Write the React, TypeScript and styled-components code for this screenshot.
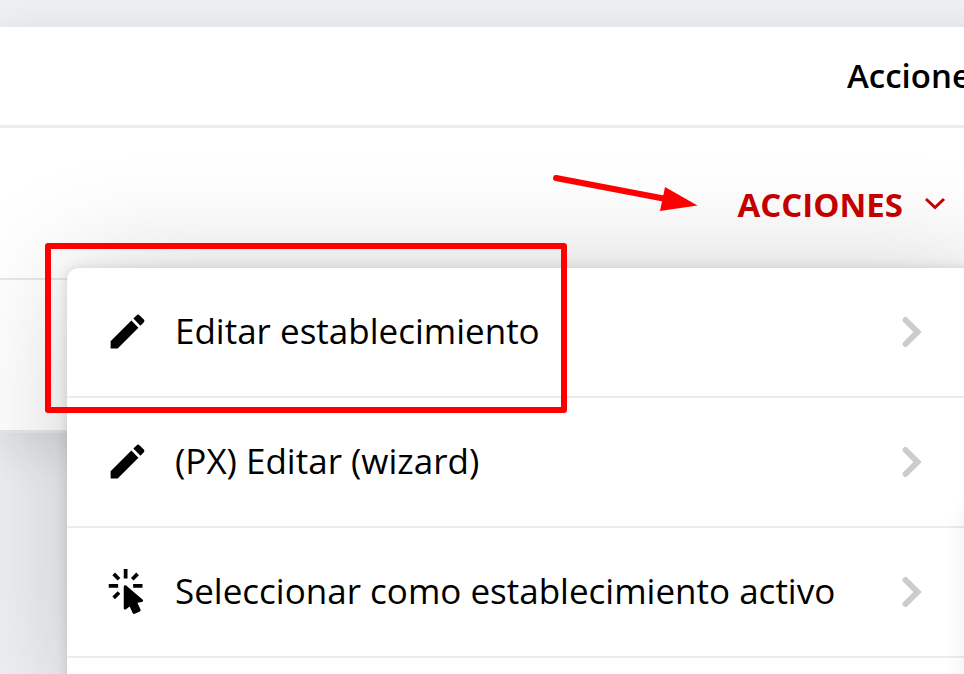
import React from "react";
import styled, { createGlobalStyle } from "styled-components";

const GlobalStyle = createGlobalStyle`
  * { box-sizing: border-box; }
  html, body { margin: 0; }
  body {
    background: #eceef0;
    color: #000;
    font-family: "Open Sans", "Noto Sans", sans-serif;
    overflow: hidden;
  }
  button { font: inherit; color: inherit; background: none; border: 0; margin: 0; cursor: pointer; }
`;

const Page = styled.main`
  position: relative;
  min-height: 100vh;
  padding-top: 27px;
  overflow: hidden;
  background: #eff0f3;
`;

const TableCard = styled.section`
  width: calc(100% + 40px);
  background: #fff;
  box-shadow: 0 12px 48px rgba(20, 25, 30, 0.13);
`;

const Table = styled.table`
  width: 100%;
  border-collapse: separate;
  border-spacing: 0;
`;

const HeadCell = styled.th`
  height: 101px;
  padding: 0 17px 0 0;
  border-bottom: 3px solid #ececec;
  font-size: 33px;
  font-weight: 600;
  line-height: 48px;
  text-align: right;
`;

const Cell = styled.td<{ $last?: boolean }>`
  height: ${(p) => (p.$last ? 153 : 152)}px;
  padding: 4px 58px 0 0;
  border-bottom: ${(p) => (p.$last ? 3 : 2)}px solid #e8e8e8;
  text-align: right;
`;

const ActionsButton = styled.button`
  display: inline-flex;
  align-items: center;
  gap: 21px;
  padding: 0;
  color: #c80000;
  font-size: 33px;
  font-weight: 700;
  line-height: 48px;
`;

const Menu = styled.ul`
  position: absolute;
  top: 268px;
  left: 67px;
  right: -32px;
  margin: 0;
  padding: 0 0 40px;
  list-style: none;
  background: #fff;
  border-radius: 12px;
  box-shadow: 0 0 12px rgba(0, 0, 0, 0.13), 0 4px 120px rgba(0, 0, 0, 0.19);
`;

const MenuItem = styled.li`
  position: relative;
  border-bottom: 2px solid #ececec;
`;

const MenuButton = styled.button`
  display: flex;
  align-items: center;
  width: 100%;
  height: 128px;
  padding: 0 74px 2px 38px;
  text-align: left;
`;

const Label = styled.span`
  flex: 1;
  margin-left: 25px;
  font-size: 35px;
  line-height: 48px;
  white-space: nowrap;
`;

const Highlight = styled.div`
  position: absolute;
  top: -25px;
  left: -22px;
  width: 522px;
  height: 170px;
  border: 6px solid #f00;
  border-radius: 3px;
  pointer-events: none;
  z-index: 1;
`;

const Pointer = styled.svg`
  position: absolute;
  top: 168px;
  left: 548px;
`;

const SidePanel = styled.aside`
  position: absolute;
  top: 510px;
  left: 100%;
  width: 80px;
  height: 300px;
  box-shadow: 0 0 20px rgba(0, 0, 0, 0.08);
`;

const Icon = ({ d }: { d: string }) => (
  <svg width="45" height="45" viewBox="0 0 24 24" aria-hidden="true">
    <path d={d} fill="#000" />
  </svg>
);

const PENCIL =
  "M3 17.25V21h3.75L17.81 9.94l-3.75-3.75L3 17.25zM20.71 7.04c.39-.39.39-1.02 0-1.41l-2.34-2.34c-.39-.39-1.02-.39-1.41 0l-1.83 1.83 3.75 3.75 1.83-1.83z";
const CURSOR =
  "M10.76,8.69A0.76,0.76 0 0,0 10,9.45V20.9C10,21.32 10.34,21.66 10.76,21.66C10.95,21.66 11.11,21.6 11.24,21.5L13.15,19.95L14.81,23.57C14.94,23.84 15.21,24 15.5,24C15.61,24 15.72,24 15.83,23.92L18.59,22.64C18.97,22.46 19.15,22 18.95,21.63L17.28,18L19.69,17.55C19.85,17.5 20,17.43 20.12,17.29C20.39,16.97 20.35,16.5 20,16.21L11.26,8.86L11.25,8.87C11.12,8.76 10.95,8.69 10.76,8.69M15,10V8H20V10H15M13.83,4.76L16.66,1.93L18.07,3.34L15.24,6.17L13.83,4.76M10,0H12V5H10V0M3.93,14.66L6.76,11.83L8.17,13.24L5.34,16.07L3.93,14.66M3.93,3.34L5.34,1.93L8.17,4.76L6.76,6.17L3.93,3.34M7,10H2V8H7V10";

const items = [
  { label: "Editar establecimiento", icon: PENCIL, highlighted: true },
  { label: "(PX) Editar (wizard)", icon: PENCIL },
  { label: "Seleccionar como establecimiento activo", icon: CURSOR },
];

export default function App() {
  return (
    <>
      <GlobalStyle />
      <Page>
        <TableCard>
          <Table>
            <thead>
              <tr>
                <HeadCell scope="col">Acciones</HeadCell>
              </tr>
            </thead>
            <tbody>
              <tr>
                <Cell>
                  <ActionsButton type="button" aria-haspopup="menu" aria-expanded="true">
                    ACCIONES
                    <svg width="22" height="22" viewBox="0 0 22 22" fill="none" aria-hidden="true">
                      <path d="M2 5L11 13.500L20 5" stroke="#c80000" strokeWidth="3" />
                    </svg>
                  </ActionsButton>
                </Cell>
              </tr>
              <tr>
                <Cell $last />
              </tr>
            </tbody>
          </Table>
        </TableCard>
        <Menu>
          {items.map((item) => (
            <MenuItem key={item.label}>
              <MenuButton type="button">
                <Icon d={item.icon} />
                <Label>{item.label}</Label>
                <svg width="20" height="32" viewBox="0 0 20 32" fill="none" aria-hidden="true">
                  <path d="M3.500 5L15.500 17L3.500 29" stroke="#ccc" strokeWidth="6" strokeLinecap="round" />
                </svg>
              </MenuButton>
              {item.highlighted && <Highlight />}
            </MenuItem>
          ))}
        </Menu>
        <Pointer width="152" height="48" viewBox="0 0 152 48" aria-hidden="true">
          <path d="M8 10L118 31" stroke="#f00" strokeWidth="6" strokeLinecap="round" />
          <path d="M117 19L149.500 37.500L112 43Z" fill="#f00" />
        </Pointer>
        <SidePanel aria-hidden="true" />
      </Page>
    </>
  );
}
